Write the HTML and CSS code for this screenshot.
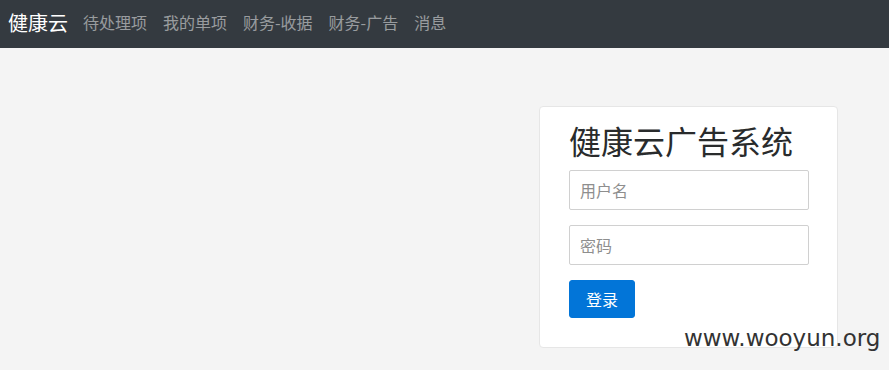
FILE: index.html
```html
<!DOCTYPE html>
<html lang="zh-CN">

<head>
    <meta charset="UTF-8">
    <meta name="viewport" content="width=device-width, initial-scale=1.0">
    <title>健康云广告系统</title>
    <link rel="stylesheet" href="styles.css">
</head>

<body>

    <nav class="navbar">
        <a class="brand" href="#">健康云</a>
        <ul class="nav">
            <li><a href="#">待处理项</a></li>
            <li><a href="#">我的单项</a></li>
            <li><a href="#">财务-收据</a></li>
            <li><a href="#">财务-广告</a></li>
            <li><a href="#">消息</a></li>
        </ul>
    </nav>

    <div class="main">
        <form class="login-card">
            <h1>健康云广告系统</h1>
            <input type="text" class="field" placeholder="用户名">
            <input type="password" class="field" placeholder="密码">
            <button type="button" class="btn">登录</button>
        </form>
    </div>

    <div class="watermark">www.wooyun.org</div>

</body>

</html>
```

FILE: styles.css
```css
* {
    margin: 0;
    padding: 0;
    box-sizing: border-box;
}

body {
    background: #f4f4f4;
    font-family: "Microsoft YaHei", "Noto Sans CJK SC", sans-serif;
    min-height: 370px;
    position: relative;
}

.navbar {
    display: flex;
    align-items: center;
    height: 48px;
    padding: 0 8px 4px;
    background: #343a40;
}

.brand {
    font-size: 20px;
    color: #fff;
    text-decoration: none;
    margin-right: 7px;
}

.nav {
    display: flex;
    list-style: none;
}

.nav a {
    display: block;
    padding: 0 8px;
    font-size: 16px;
    color: rgba(255, 255, 255, 0.5);
    text-decoration: none;
}

.main {
    display: flex;
    justify-content: flex-end;
    padding: 58px 51px 0 0;
}

.login-card {
    display: flex;
    flex-direction: column;
    align-items: flex-start;
    width: 299px;
    padding: 14px 29px 29px;
    background: #fff;
    border: 1px solid #e6e6e6;
    border-radius: 4px;
}

.login-card h1 {
    font-size: 32px;
    font-weight: normal;
    line-height: 38px;
    color: #292b2c;
    margin-bottom: 11px;
}

.field {
    width: 240px;
    height: 40px;
    padding: 0 10px;
    margin-bottom: 15px;
    font-family: inherit;
    font-size: 16px;
    color: #464a4c;
    border: 1px solid #d0d0d0;
    border-radius: 2px;
    outline: none;
}

.field::placeholder {
    color: #8e8e8e;
}

.btn {
    height: 38px;
    padding: 0 16px;
    font-family: inherit;
    font-size: 16px;
    color: #fff;
    background: #0275d8;
    border: 1px solid #0275d8;
    border-radius: 3px;
}

/* watermark over the bottom right corner */
.watermark {
    position: absolute;
    left: 684px;
    top: 325px;
    font-family: "DejaVu Sans", Verdana, sans-serif;
    font-size: 23px;
    color: #333;
}
```
